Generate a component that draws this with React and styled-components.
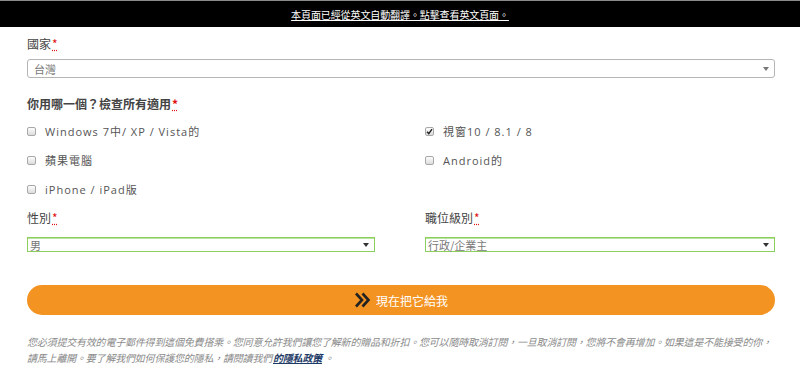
import React from 'react';
import styled, { createGlobalStyle } from 'styled-components';

const GlobalStyle = createGlobalStyle`
  html, body {
    margin: 0;
    padding: 0;
    background: #fff;
  }
  body {
    font-family: "Open Sans", "Noto Sans CJK TC", sans-serif;
  }
`;

const NoticeBar = styled.div`
  height: 26px;
  border-top: 1px solid #8a8a8a;
  background: #000;
  display: flex;
  align-items: center;
  justify-content: center;

  > a {
    color: #fff;
    font-family: "Noto Sans CJK TC", sans-serif;
    font-size: 10px;
    letter-spacing: -0.1px;
    text-decoration: underline;
    cursor: pointer;
  }
`;

const Form = styled.div`
  display: flex;
  flex-direction: column;
  padding: 0 25px 0 27px;
`;

const Label = styled.div`
  margin-top: ${props => props.top || 0}px;
  height: 16px;
  line-height: 16px;
  font-family: "Noto Sans CJK TC", sans-serif;
  font-size: 12px;
  font-weight: ${props => (props.bold ? 700 : 400)};
  color: #444;
  white-space: nowrap;

  > abbr {
    color: #e01010;
    text-decoration: underline dotted #e01010;
    margin-left: 1px;
  }
`;

const SelectBox = styled.div`
  margin-top: ${props => props.top || 0}px;
  height: ${props => props.h}px;
  box-sizing: border-box;
  border: 1px solid ${props => (props.valid ? '#8ccf5c' : '#b5b5b5')};
  border-radius: ${props => (props.valid ? 0 : 3)}px;
  box-shadow: ${props => (props.valid ? 'inset 0 1px 0 #b9e3a0' : 'none')};
  display: flex;
  align-items: center;
  justify-content: space-between;
  padding: 0 5px 0 ${props => (props.valid ? 2 : 6)}px;
  font-family: "Noto Sans CJK TC", sans-serif;
  font-size: 11px;
  color: #777;
  background: #fff;
`;

const Arrow = styled.span`
  width: 0;
  height: 0;
  border-left: 3px solid transparent;
  border-right: 3px solid transparent;
  border-top: 4px solid ${props => (props.dark ? '#333' : '#777')};
`;

const CheckGrid = styled.div`
  margin-top: 4.5px;
  display: grid;
  grid-template-columns: 398px 1fr;
  grid-auto-rows: 29px;
`;

const CheckItem = styled.label`
  display: flex;
  align-items: center;
  gap: 9px;
  font-family: "Open Sans", "Noto Sans CJK TC", sans-serif;
  font-size: 11px;
  letter-spacing: 1px;
  color: #555;
  white-space: nowrap;
`;

const Box = styled.span`
  width: 7px;
  height: 7px;
  border: 1px solid #a8a8a8;
  border-radius: 2px;
  background: linear-gradient(#fdfdfd, #dcdcdc);
  display: flex;
  align-items: center;
  justify-content: center;
`;

const SelectRow = styled.div`
  display: grid;
  grid-template-columns: 398px 1fr;
`;

const Field = styled.div`
  display: flex;
  flex-direction: column;
  padding-right: ${props => props.pad || 0}px;
`;

const SubmitButton = styled.button`
  margin-top: 33px;
  height: 30px;
  border: none;
  border-radius: 15px;
  background: #f39322;
  display: flex;
  align-items: center;
  justify-content: center;
  gap: 5px;
  color: #fff;
  font-family: "Noto Sans CJK TC", sans-serif;
  font-size: 12px;
  cursor: pointer;
  padding: 0;
`;

const Disclaimer = styled.p`
  margin: 19px 0 0;
  font-family: "Noto Sans CJK TC", sans-serif;
  font-style: italic;
  font-size: 10px;
  line-height: 16px;
  letter-spacing: -0.2px;
  color: #8a8a8a;

  > a {
    color: #1d3a66;
    font-weight: 700;
    text-decoration: underline;
    margin: 0 2px 0 1px;
  }
`;

const checks = [
  { text: 'Windows 7中/ XP / Vista的' },
  { text: '視窗10 / 8.1 / 8', checked: true },
  { text: '蘋果電腦' },
  { text: 'Android的' },
  { text: 'iPhone / iPad版' },
];

const Required = () => <abbr>*</abbr>;

export default function App() {
  return (
    <>
      <GlobalStyle />
      <NoticeBar>
        <a>本頁面已經從英文自動翻譯。點擊查看英文頁面。</a>
      </NoticeBar>
      <Form>
        <Label top={9}>國家<Required /></Label>
        <SelectBox top={7} h={19}>
          <span>台灣</span>
          <Arrow />
        </SelectBox>

        <Label top={18} bold>你用哪一個？檢查所有適用<Required /></Label>
        <CheckGrid>
          {checks.map((c, idx) => (
            <CheckItem key={idx}>
              <Box>
                {c.checked && (
                  <svg width="7" height="7" viewBox="0 0 7 7">
                    <path d="M1 3.8 L2.8 5.6 L6 1.2" fill="none" stroke="#222" strokeWidth="1.4" />
                  </svg>
                )}
              </Box>
              {c.text}
            </CheckItem>
          ))}
        </CheckGrid>

        <SelectRow>
          <Field pad={50}>
            <Label top={6.5}>性別<Required /></Label>
            <SelectBox top={11} h={15} valid>
              <span>男</span>
              <Arrow dark />
            </SelectBox>
          </Field>
          <Field>
            <Label top={6.5}>職位級別<Required /></Label>
            <SelectBox top={11} h={15} valid>
              <span>行政/企業主</span>
              <Arrow dark />
            </SelectBox>
          </Field>
        </SelectRow>

        <SubmitButton>
          <svg width="17" height="16" viewBox="0 0 17 16">
            <path d="M2 1.5 L8 8 L2 14.5" fill="none" stroke="#222" strokeWidth="2.6" />
            <path d="M8.5 1.5 L14.5 8 L8.5 14.5" fill="none" stroke="#222" strokeWidth="2.6" />
          </svg>
          現在把它給我
        </SubmitButton>

        <Disclaimer>
          您必須提交有效的電子郵件得到這個免費搭乘。您同意允許我們讓您了解新的贈品和折扣。您可以隨時取消訂閱，一旦取消訂閱，您將不會再增加。如果這是不能接受的你，請馬上離開。要了解我們如何保護您的隱私，請閱讀我們<a>的隱私政策</a>。
        </Disclaimer>
      </Form>
    </>
  );
}
